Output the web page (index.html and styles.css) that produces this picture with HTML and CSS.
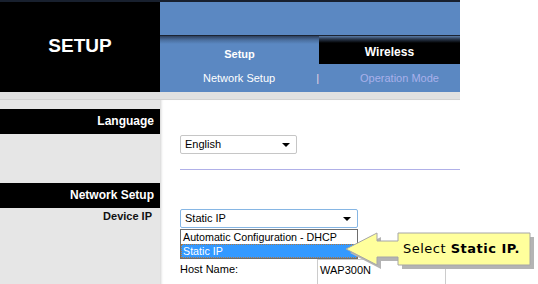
FILE: index.html
```html
<!DOCTYPE html>
<html lang="en">
<head>
  <meta charset="UTF-8">
  <title>Setup - Network Setup</title>
  <link rel="stylesheet" href="styles.css">
</head>
<body>
  <div class="page">
    <!-- Cabeçalho -->
    <div class="header">
      <div class="brand">SETUP</div>
      <div class="nav">
        <div class="nav-top"></div>
        <div class="tabs">
          <div class="tab active">Setup</div>
          <div class="tab">Wireless</div>
        </div>
        <div class="subnav">
          <span class="sub current">Network Setup</span>
          <span class="sep">|</span>
          <span class="sub">Operation Mode</span>
        </div>
      </div>
    </div>
    <div class="strip"></div>

    <!-- Conteúdo -->
    <div class="main">
      <div class="side">
        <div class="side-bar">Language</div>
        <div class="side-bar second">Network Setup</div>
        <div class="side-label">Device IP</div>
      </div>
      <div class="content">
        <div class="select lang">English<span class="caret"></span></div>
        <div class="divider"></div>
        <div class="select-wrap">
          <div class="select ip">Static IP<span class="caret"></span></div>
          <div class="listbox">
            <div class="option">Automatic Configuration - DHCP</div>
            <div class="option selected">Static IP</div>
          </div>
        </div>
        <div class="host-row">
          <span class="host-label">Host Name:</span>
          <div class="host-input">WAP300N</div>
        </div>
      </div>
    </div>

    <!-- Balão de dica -->
    <div class="callout">
      <svg class="callout-shape" width="194" height="42" viewBox="0 0 194 42">
        <path d="M6 22 L37 6 L37 14 L58 14 L58 6 L190 6 L190 38 L58 38 L58 30 L37 30 L37 38 Z" fill="#b4b4b4"/>
        <path d="M2 18 L33 2 L33 10 L54 10 L54 2 L186 2 L186 34 L54 34 L54 26 L33 26 L33 34 Z" fill="#ffff9c" stroke="#a6a6a6" stroke-width="1"/>
      </svg>
      <span class="callout-text">Select <b>Static IP.</b></span>
    </div>
  </div>
</body>
</html>
```

FILE: styles.css
```css
/* Base */
body {
  margin: 0;
  padding: 0;
  background-color: #ffffff;
  font-family: 'Liberation Sans', Arial, sans-serif;
  font-size: 11px;
  color: #000;
  overflow: hidden;
}

.page {
  position: relative;
  width: 460px;
}

/* Cabeçalho */
.header {
  display: flex;
  height: 92px;
  border-top: 2px solid #18202e;
  box-sizing: border-box;
}

.brand {
  width: 160px;
  background-color: #000;
  color: #fff;
  font-weight: bold;
  font-size: 19px;
  display: flex;
  align-items: center;
  justify-content: center;
  padding-bottom: 2px;
  box-sizing: border-box;
}

.nav {
  width: 300px;
  display: flex;
  flex-direction: column;
  background-color: #5b88c2;
}

.nav-top {
  height: 33px;
  border-bottom: 1px solid #1c2433;
}

.tabs {
  display: flex;
  height: 28px;
}

.tab {
  color: #fff;
  font-weight: bold;
  display: flex;
  align-items: center;
  justify-content: center;
}

.tab.active {
  width: 159px;
  font-size: 11px;
  padding-top: 7px;
  box-sizing: border-box;
  background: linear-gradient(to bottom, #2e405c 0px, #4a6e9e 4px, #5b88c2 8px, #5b88c2 100%);
}

.tab:not(.active) {
  flex: 1;
  font-size: 12px;
  padding-top: 3px;
  box-sizing: border-box;
  background: linear-gradient(to bottom, #5a7ca8 0px, #2c3a50 3px, #000 7px, #000 100%);
}

.subnav {
  height: 28px;
  display: flex;
  align-items: center;
  padding-bottom: 1px;
  box-sizing: border-box;
}

.sub {
  color: #a9b0ea;
}

.sub.current {
  color: #fff;
  margin-left: 43px;
}

.sep {
  color: #e4d2e0;
  margin-left: 41px;
  margin-right: 41px;
}

.strip {
  height: 7px;
  background-color: #e1e1e1;
  border-bottom: 1px solid #d2d2d2;
}

/* Conteúdo */
.main {
  display: flex;
  height: 185px;
}

.side {
  width: 160px;
  background-color: #e6e6e6;
  padding-top: 9px;
  box-sizing: border-box;
}

.side-bar {
  height: 25px;
  line-height: 25px;
  background-color: #000;
  color: #fff;
  font-weight: bold;
  font-size: 12px;
  text-align: right;
  padding-right: 6px;
}

.side-bar.second {
  margin-top: 49px;
}

.side-label {
  text-align: right;
  font-weight: bold;
  font-size: 11px;
  padding-right: 8px;
  margin-top: 2px;
  color: #111;
}

.content {
  flex: 1;
  padding-left: 20px;
  padding-top: 35px;
  box-shadow: inset 3px 0 3px -2px #cfcfcf;
}

.select {
  position: relative;
  height: 19px;
  line-height: 17px;
  border: 1px solid #b3b3b3;
  border-radius: 2px;
  padding-left: 4px;
  box-sizing: border-box;
  background-color: #fff;
}

.select.lang {
  width: 117px;
  border-color: #c6c6c6;
}

.select.ip {
  width: 178px;
  border-color: #86b6e4;
}

.caret {
  position: absolute;
  right: 6px;
  top: 7px;
  width: 0;
  height: 0;
  border-left: 4px solid transparent;
  border-right: 4px solid transparent;
  border-top: 4px solid #000;
}

.divider {
  height: 1px;
  background-color: #b0b0e8;
  margin-top: 15px;
  margin-bottom: 39px;
}

.select-wrap {
  position: relative;
  width: 178px;
}

.listbox {
  position: absolute;
  top: 20px;
  left: 0;
  width: 178px;
  border: 1px solid #6e6e6e;
  box-sizing: border-box;
  background-color: #fff;
  z-index: 2;
}

.option {
  height: 14px;
  line-height: 14px;
  padding-left: 2px;
  font-size: 10.7px;
}

.option.selected {
  background-color: #3399ff;
  color: #fff;
  outline: 1px dotted #b07840;
  outline-offset: -1px;
}

.host-row {
  display: flex;
  align-items: flex-start;
  margin-top: 31px;
}

.host-label {
  width: 137px;
  line-height: 21px;
}

.host-input {
  width: 129px;
  height: 26px;
  line-height: 20px;
  border: 1px solid #cccccc;
  padding-left: 2px;
  box-sizing: border-box;
}

/* Balão */
.callout {
  position: absolute;
  left: 344px;
  top: 231px;
  width: 194px;
  height: 42px;
  z-index: 3;
}

.callout-shape {
  position: absolute;
  left: 0;
  top: 0;
}

.callout-text {
  position: absolute;
  left: 59px;
  top: 10px;
  font-family: 'DejaVu Sans', Verdana, sans-serif;
  font-size: 13px;
  letter-spacing: 0.5px;
  color: #000;
  white-space: nowrap;
}
```
